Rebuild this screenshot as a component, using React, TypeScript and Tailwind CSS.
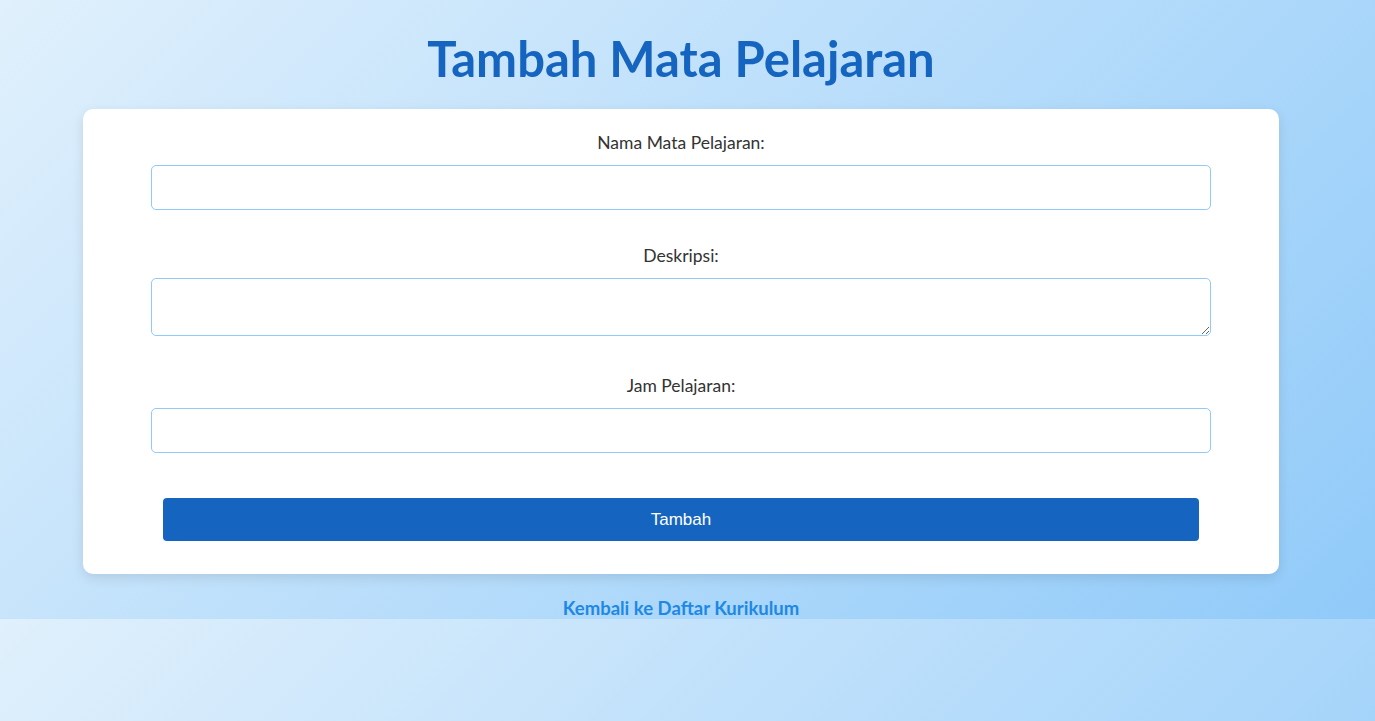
import React from "react";

export default function App() {
  return (
    <div
      className="min-h-[721px] w-full bg-[linear-gradient(135deg,#e0f0fc,#90caf9)] bg-[length:100%_619px] bg-repeat"
      style={{ fontFamily: "Lato, 'Open Sans', sans-serif" }}
    >
      <div className="w-[1362px] flex flex-col items-center">
        <h1 className="mt-[30px] text-[49px] leading-[56px] font-bold text-[#1565c0]">
          Tambah Mata Pelajaran
        </h1>
        <div className="mt-[23px] w-[1196px] rounded-[10px] bg-white shadow-[0_4px_12px_rgba(0,0,0,0.1)] px-[68px] pt-[24px] pb-[33px]">
          <form className="flex flex-col" onSubmit={(e) => e.preventDefault()}>
            <label className="block text-center text-[17.5px] leading-[20px] text-[#333]">
              Nama Mata Pelajaran:
            </label>
            <input
              type="text"
              className="mt-[12px] block h-[45px] w-full rounded-[5px] border border-[#90caf9] bg-white px-3 outline-none"
            />
            <label className="mt-[36px] block text-center text-[17.5px] leading-[20px] text-[#333]">
              Deskripsi:
            </label>
            <textarea className="mt-[12px] block h-[58px] w-full rounded-[5px] border border-[#90caf9] bg-white px-3 outline-none" />
            <label className="mt-[40px] block text-center text-[17.5px] leading-[20px] text-[#333]">
              Jam Pelajaran:
            </label>
            <input
              type="text"
              className="mt-[12px] block h-[45px] w-full rounded-[5px] border border-[#90caf9] bg-white px-3 outline-none"
            />
            <button
              type="submit"
              className="mx-[12px] mt-[45px] h-[43px] rounded-[4px] bg-[#1565c0] text-[17px] text-white"
              style={{ fontFamily: "'Liberation Sans', Arial, sans-serif" }}
            >
              Tambah
            </button>
          </form>
        </div>
        <a
          href="#"
          className="mt-[24px] mb-[1px] block text-[18.5px] leading-[20px] font-bold text-[#1e88e5]"
        >
          Kembali ke Daftar Kurikulum
        </a>
      </div>
    </div>
  );
}
